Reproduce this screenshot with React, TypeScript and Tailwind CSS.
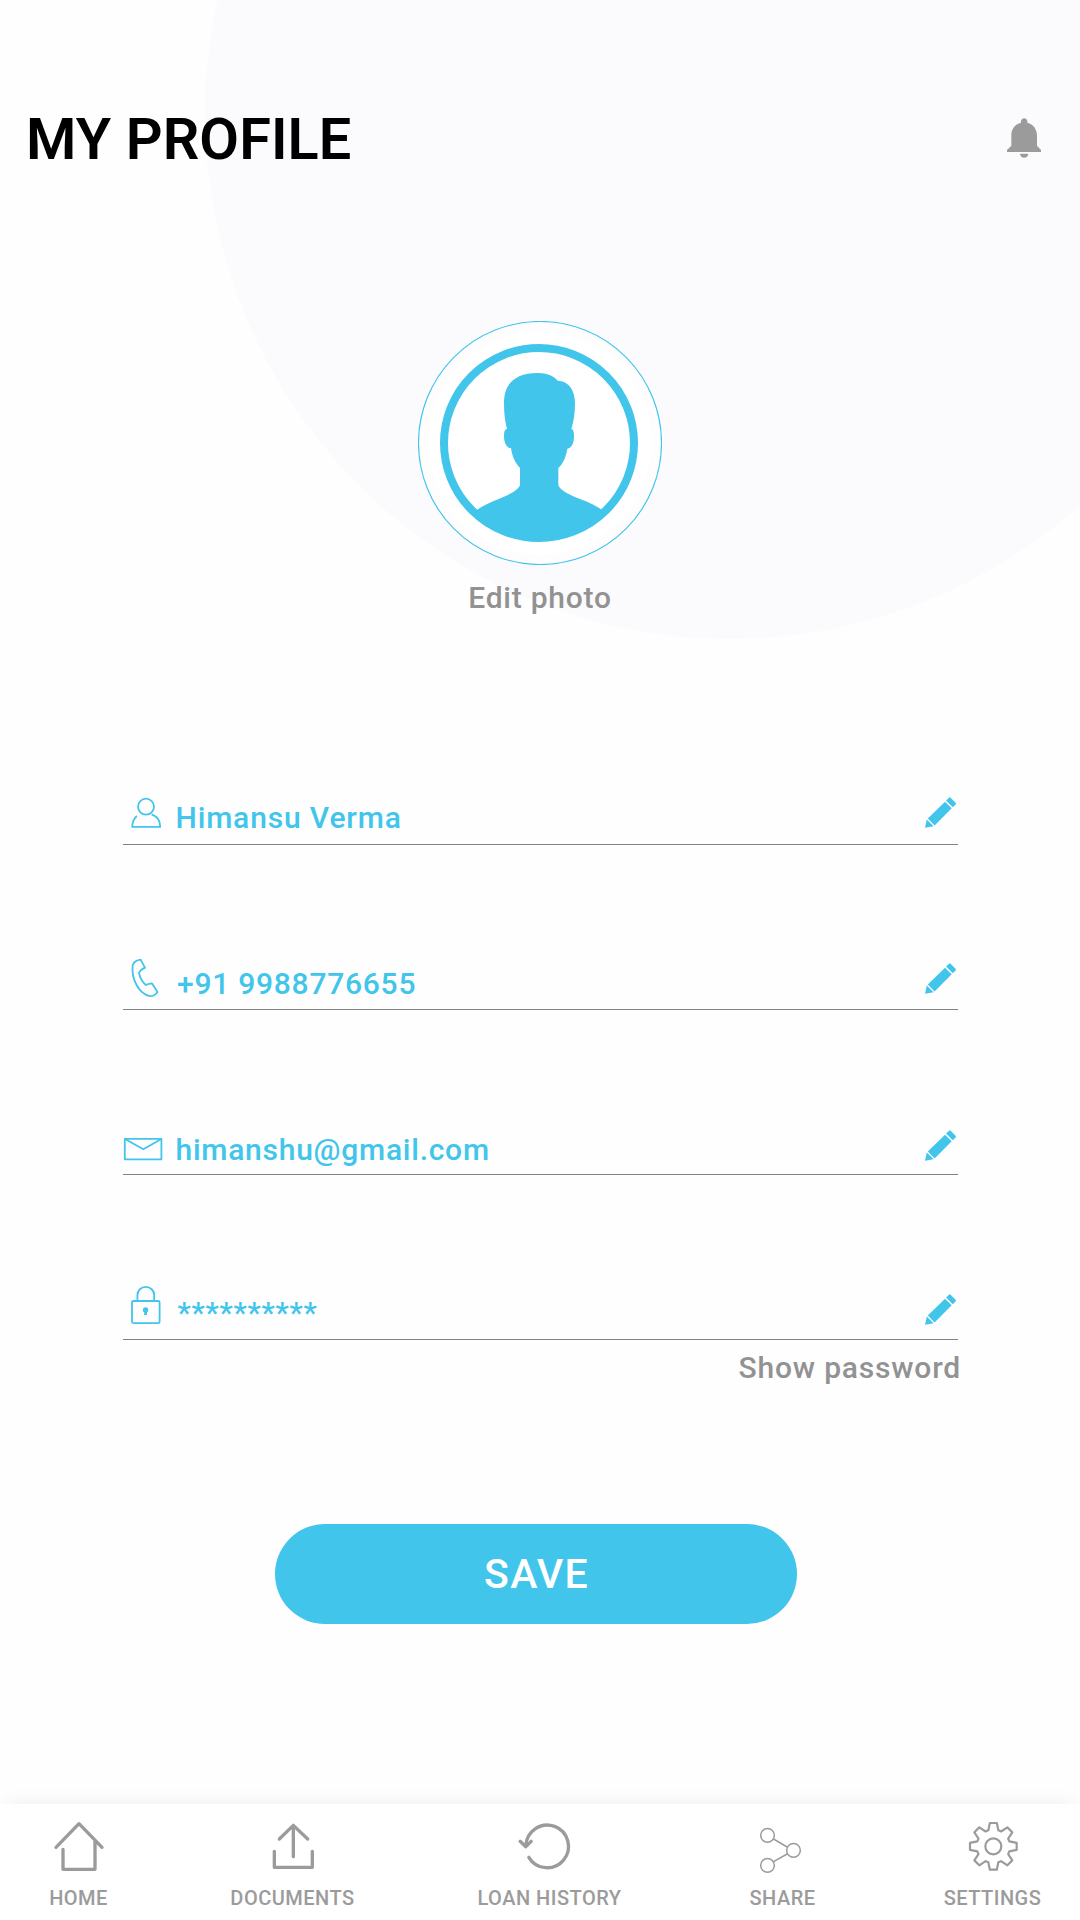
import type { ReactNode } from 'react';

interface ProfileField {
  id: string;
  value: string;
  icon: ReactNode;
  textClass: string;
  pencilClass: string;
}

interface NavItem {
  label: string;
  viewBox: string;
  icon: ReactNode;
  className: string;
}

const fields: ProfileField[] = [
  {
    id: 'name',
    value: 'Himansu Verma',
    textClass: 'pb-[6px] pl-[0.5px] tracking-[0.85px]',
    pencilClass: 'mb-4',
    icon: (
      <>
        <circle cx="23" cy="14.7" r="8" />
        <path d="M13.8 24C10.8 26.5 9.4 30 9.2 34.8H37.2C37.2 29 34.5 24.5 28.6 22.3" />
      </>
    ),
  },
  {
    id: 'phone',
    value: '+91 9988776655',
    textClass: 'pb-[5px] pl-[2px] tracking-[0.75px]',
    pencilClass: 'mb-[15px]',
    icon: (
      <path d="M9.7 8C11 5 14 3 17.6 2.6L22 10.6Q17 13 16 15.8C17 21 19.5 25 22.8 28Q26 26.4 29 26.4L34.5 35Q31 39.5 27 39.2C16 37 8 22 9.7 8Z" />
    ),
  },
  {
    id: 'email',
    value: 'himanshu@gmail.com',
    textClass: 'pb-[4px] pl-[0.5px] tracking-[0.75px]',
    pencilClass: 'mb-[13px]',
    icon: (
      <>
        <rect x="1.8" y="16.8" width="36.6" height="20.6" />
        <path d="M2 17L20.3 27.3L38.4 17" />
      </>
    ),
  },
  {
    id: 'password',
    value: '**********',
    textClass: 'pb-[6px] pl-[2.5px] tracking-[0.7px]',
    pencilClass: 'mb-[14px]',
    icon: (
      <>
        <rect x="9" y="14" width="27.6" height="22.2" rx="1.5" />
        <path d="M14.4 14V8.2A8.4 8.4 0 0 1 31.2 8.2V14" />
        <path d="M22.6 23V28" strokeWidth="2.8" />
        <circle cx="22.6" cy="23" r="1.8" fill="currentColor" />
      </>
    ),
  },
];

function gearPath(cx: number, cy: number) {
  const tooth = [[-15, -48], [-10.5, -70], [10.5, -70], [15, -48]];
  const points: string[] = [];
  for (let i = 0; i < 8; i++) {
    const a = (i * Math.PI) / 4;
    for (const [x, y] of tooth) {
      const px = cx + x * Math.cos(a) - y * Math.sin(a);
      const py = cy + x * Math.sin(a) + y * Math.cos(a);
      points.push(`${px.toFixed(1)} ${py.toFixed(1)}`);
    }
  }
  return `M${points.join('L')}Z`;
}

const navItems: NavItem[] = [
  {
    label: 'HOME',
    viewBox: '158 90 156 156',
    className: 'w-[58px]',
    icon: <path d="M167 172L236 101L305 172M188 178V238H284V154" strokeWidth="10" />,
  },
  {
    label: 'DOCUMENTS',
    viewBox: '799 90 156 156',
    className: 'ml-[123px] w-[124px]',
    icon: <path d="M878 200V107M836 147L878 106L921 147M821 184V232H935V184" strokeWidth="10" />,
  },
  {
    label: 'LOAN HISTORY',
    viewBox: '249.5 90 156 156',
    className: 'ml-[123px] w-[144px]',
    icon: <path d="M255 168A64 64 0 1 1 264 202M238 154L255 170L271 154" strokeWidth="10" />,
  },
  {
    label: 'SHARE',
    viewBox: '948.5 90 156 156',
    className: 'ml-[128px] w-[66px]',
    icon: (
      <g strokeWidth="4.5">
        <circle cx="980" cy="136" r="20.5" />
        <circle cx="1058" cy="181" r="20.5" />
        <circle cx="980" cy="226" r="20.5" />
        <path d="M998 147L1039 171M998 215L1039 192" />
      </g>
    ),
  },
  {
    label: 'SETTINGS',
    viewBox: '198.5 90 156 156',
    className: 'ml-[128px] w-[98px]',
    icon: (
      <g strokeWidth="6.5">
        <circle cx="277.5" cy="169" r="24" />
        <path d={gearPath(277.5, 169)} />
      </g>
    ),
  },
];

function BellIcon() {
  return (
    <svg className="mb-1 h-10 w-[34px] text-[#9b9b9b]" viewBox="141 84 102 120" fill="currentColor">
      <path d="M183 98C180 80 205 80 202 98C220 102 231 118 231 136V167L243 180V186H141V180L154 167V136C154 118 165 102 183 98Z" />
      <path d="M180 191H205A12.5 12.5 0 0 1 180 191Z" />
    </svg>
  );
}

function PencilIcon({ className }: { className: string }) {
  return (
    <svg className={`h-[31px] w-[31px] ${className}`} viewBox="0 0 31 31" fill="currentColor">
      <path d="M20 4.7L26.7 11.3L9.6 28.4L2.8 21.6Z" />
      <path d="M1.8 22.4L8.6 29.2L0 30.8Z" />
      <path d="M21.1 3.6L24 .7Q24.8 0 25.6 .7L30.6 5.8Q31.4 6.6 30.6 7.4L27.8 10.2Z" />
    </svg>
  );
}

function Avatar() {
  return (
    <svg className="h-[244px] w-[244px]" viewBox="54 63 732 732">
      <circle cx="420" cy="429" r="364.5" fill="#fdfdfe" stroke="#41c5eb" strokeWidth="3.5" />
      <circle cx="420" cy="429" r="335" fill="#ffffff" />
      <circle cx="417" cy="429" r="285" fill="none" stroke="#41c5eb" strokeWidth="24" />
      <path
        fill="#41c5eb"
        d="M232 629C275 597 345 588 360 556V504C350 493 337 475 333 444C320 445 312 428 312 408C312 395 314 388 321 387C315 366 312 340 312 310C312 250 345 219 415 219C440 219 462 228 473 242C505 243 525 268 525 310C525 340 521 365 514 387C520 389 522 395 522 408C522 430 515 444 502 446C498 470 490 490 475 504V556C490 588 560 597 605 629L610 640A286 286 0 0 1 224 640Z"
      />
    </svg>
  );
}

export default function App() {
  return (
    <div className="relative flex h-[1920px] w-[1080px] flex-col overflow-hidden bg-[#fefefe] font-['Roboto',sans-serif] font-medium">
      <div className="absolute top-[-411px] left-[205px] h-[1050px] w-[1050px] rounded-full bg-[#fbfbfd]"></div>

      <header className="relative flex items-center justify-between pt-[110px] pr-[39px] pl-[26px]">
        <h1 className="text-[57.6px] leading-[60px] font-semibold tracking-[0.1px] text-black">MY PROFILE</h1>
        <BellIcon />
      </header>

      <section className="relative mt-[151px] flex flex-col items-center">
        <Avatar />
        <button className="mt-[13px] text-[30px] leading-10 tracking-[0.75px] text-[#929292]">Edit photo</button>
      </section>

      <main className="relative mt-[62px] flex flex-col pr-[122px] pl-[123px]">
        {fields.map((field) => (
          <div key={field.id} className="flex h-[165px] items-end border-b border-[#808285] text-[#41c5eb]">
            <svg
              className="h-14 w-[52px] shrink-0"
              viewBox="0 -4 52 56"
              fill="none"
              stroke="currentColor"
              strokeWidth="1.8"
              strokeLinejoin="round"
            >
              {field.icon}
            </svg>
            <span className={`flex-1 text-[30px] leading-10 ${field.textClass}`}>{field.value}</span>
            <PencilIcon className={`mr-[2px] ${field.pencilClass}`} />
          </div>
        ))}
        <button className="mt-2 mr-[-3px] self-end text-[30px] leading-10 tracking-[0.8px] text-[#929292]">
          Show password
        </button>
      </main>

      <button className="relative mt-[136px] ml-[275px] h-[100px] w-[522px] rounded-full bg-[#41c5eb] pb-px pl-px text-[41px] leading-[60px] tracking-[1.2px] text-white">
        SAVE
      </button>

      <nav className="mt-auto flex h-[116px] shrink-0 bg-white pt-4 pl-[49.5px] text-[#9b9b9b] shadow-[0_-8px_18px_-8px_rgba(0,0,0,0.07)]">
        {navItems.map((item) => (
          <a key={item.label} className={`flex flex-col items-center ${item.className}`}>
            <svg
              className="h-[52px] w-[52px] overflow-visible"
              viewBox={item.viewBox}
              fill="none"
              stroke="currentColor"
              strokeLinecap="round"
              strokeLinejoin="round"
            >
              {item.icon}
            </svg>
            <span className="mt-3 text-[20px] leading-[28px] tracking-[0.5px] whitespace-nowrap">{item.label}</span>
          </a>
        ))}
      </nav>
    </div>
  );
}
